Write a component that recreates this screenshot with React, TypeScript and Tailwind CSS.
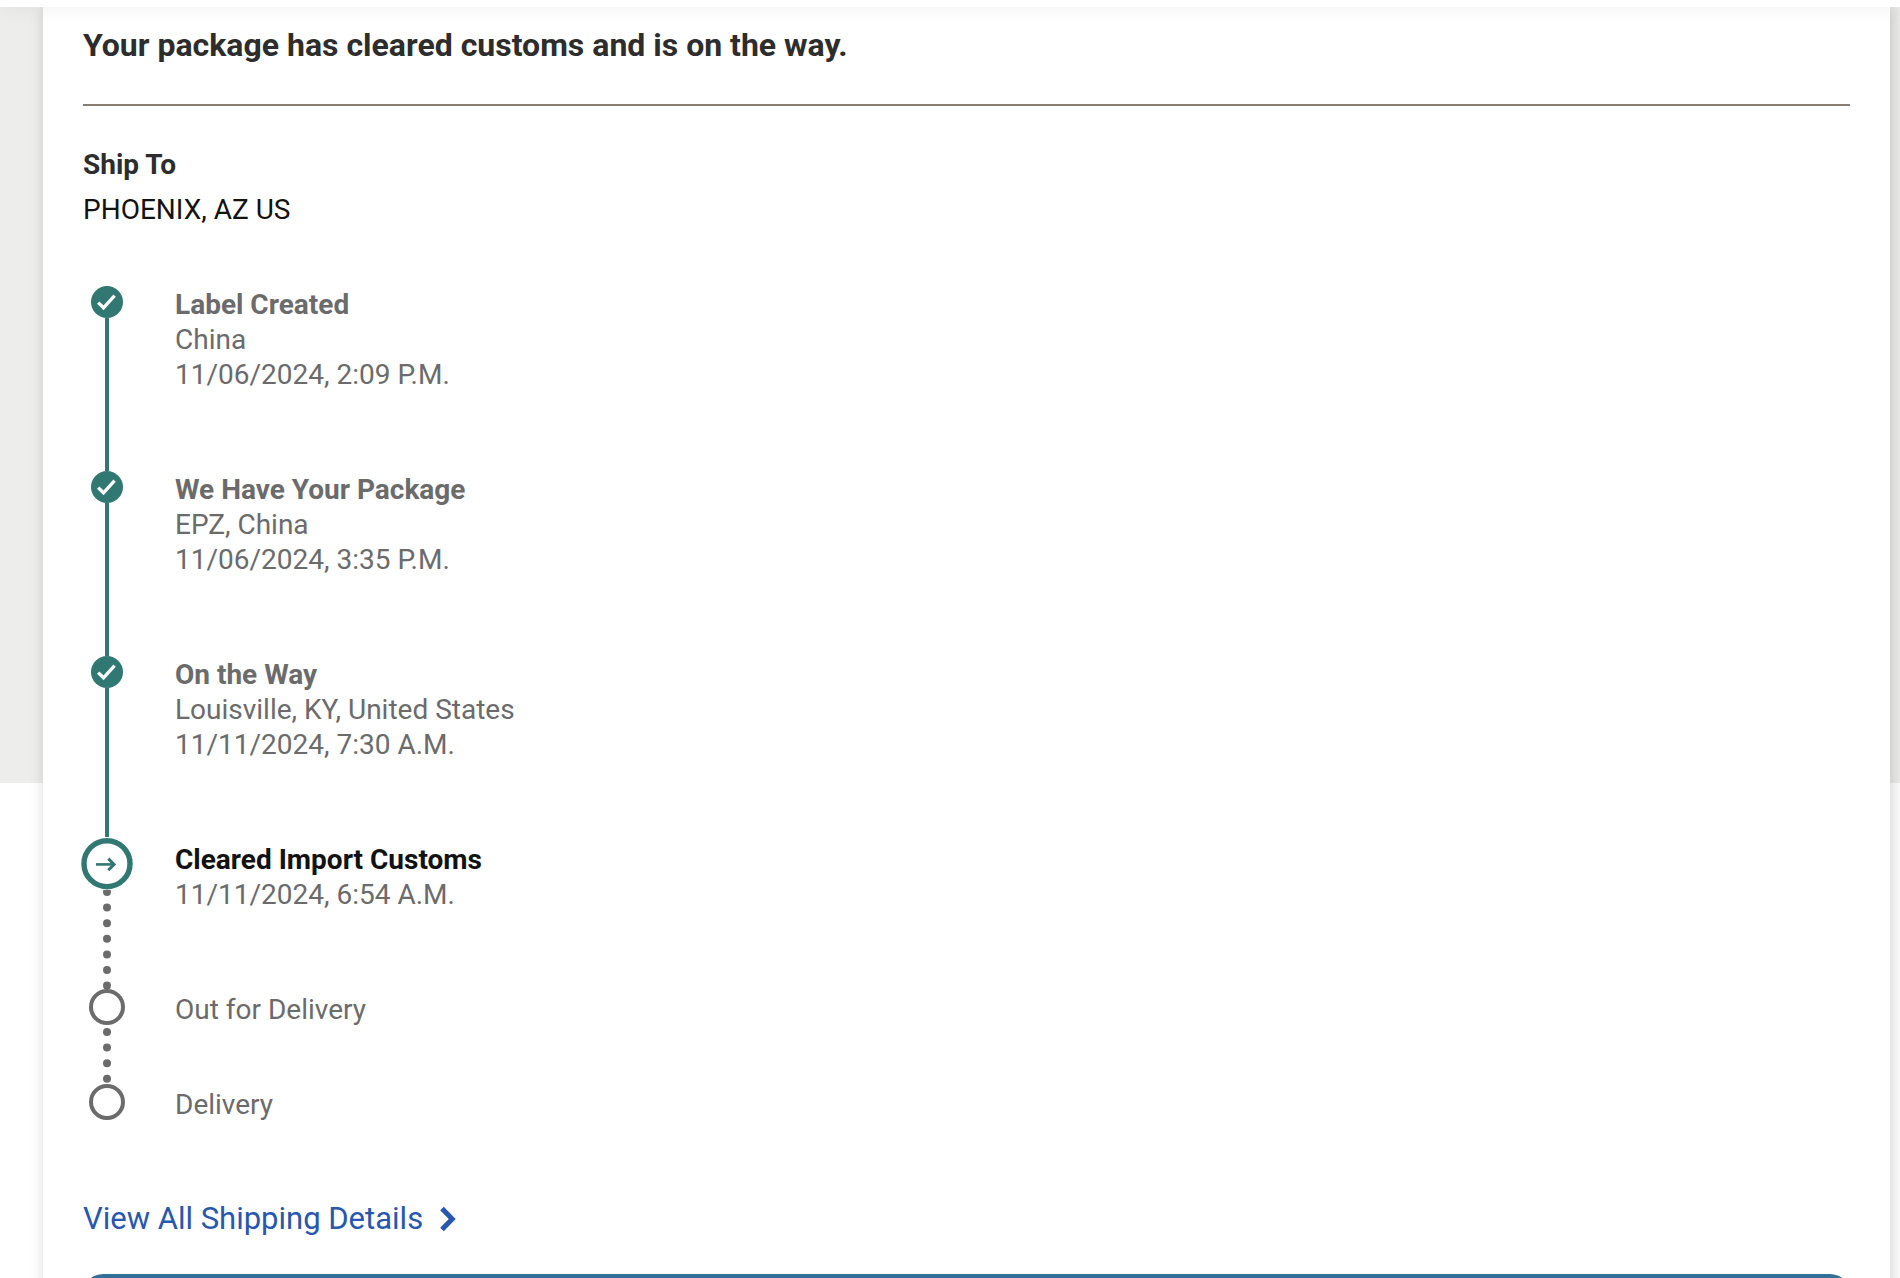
type StepStatus = 'done' | 'current' | 'pending';

interface Step {
  title: string;
  location?: string;
  time?: string;
  status: StepStatus;
}

const STEPS: Step[] = [
  { title: 'Label Created', location: 'China', time: '11/06/2024, 2:09 P.M.', status: 'done' },
  { title: 'We Have Your Package', location: 'EPZ, China', time: '11/06/2024, 3:35 P.M.', status: 'done' },
  { title: 'On the Way', location: 'Louisville, KY, United States', time: '11/11/2024, 7:30 A.M.', status: 'done' },
  { title: 'Cleared Import Customs', time: '11/11/2024, 6:54 A.M.', status: 'current' },
  { title: 'Out for Delivery', status: 'pending' },
  { title: 'Delivery', status: 'pending' },
];

const TITLE_STYLES: Record<StepStatus, string> = {
  done: 'font-bold',
  current: 'font-bold text-[#121212]',
  pending: '',
};

// space around the text of each step
const BODY_STYLES: Record<StepStatus, string> = {
  done: 'pt-px pb-[79px]',
  current: 'pt-1 pb-[77px]',
  pending: 'pt-[3px] pb-[57px]',
};

const Marker = ({ status }: { status: StepStatus }) => {
  if (status === 'done') {
    return (
      <svg className="size-8 shrink-0" viewBox="0 0 32 32" fill="none" aria-hidden="true">
        <circle cx="16" cy="16" r="16" fill="#307871" />
        <path d="M7.2 16.6L12.5 21.8L23.6 9.6" stroke="#fff" strokeWidth="3.3" />
      </svg>
    );
  }
  if (status === 'current') {
    return (
      <svg className="size-[52px] shrink-0" viewBox="0 0 52 52" fill="none" stroke="#307871" aria-hidden="true">
        <circle cx="26" cy="25.7" r="23" strokeWidth="5.4" fill="#fff" />
        <path d="M15 26.4H33" strokeWidth="2.6" />
        <path d="M27.3 20.6L33 26.4L27.3 32.2" strokeWidth="3" />
      </svg>
    );
  }
  return <span className="size-9 shrink-0 rounded-full border-4 border-[#6b6b6b] bg-white" />;
};

const Connector = ({ status }: { status: StepStatus }) => {
  if (status === 'done') return <span className="w-1 flex-1 bg-[#307871]" />;
  return (
    <svg className="h-0 w-2 grow" aria-hidden="true">
      <line x1="4" x2="4" y1={status === 'current' ? 2 : 7} y2="100%"
        stroke="#6b6b6b" strokeWidth="8" strokeLinecap="round" strokeDasharray="0 15.6" />
    </svg>
  );
};

const Timeline = () => (
  <ol className="mt-[59px]">
    {STEPS.map((step, i) => {
      const isLast = i === STEPS.length - 1;
      const beforeCurrent = STEPS[i + 1]?.status === 'current';
      return (
        <li key={step.title} className="flex gap-11">
          <div className={`flex w-12 flex-col items-center ${beforeCurrent ? 'pb-px' : ''}`}>
            <Marker status={step.status} />
            {!isLast && <Connector status={step.status} />}
          </div>
          <div className={`${beforeCurrent ? 'pt-px pb-[76px]' : BODY_STYLES[step.status]} text-[28px] leading-[35px] text-[#6b6b6b]`}>
            <h3 className={TITLE_STYLES[step.status]}>{step.title}</h3>
            {step.location && <p>{step.location}</p>}
            {step.time && <p>{step.time}</p>}
          </div>
        </li>
      );
    })}
  </ol>
);

export default function App() {
  return (
    <div className="h-screen overflow-hidden bg-[linear-gradient(#ededeb_783px,#fff_783px)] font-['Roboto','Liberation_Sans',sans-serif]">
      <header className="relative z-10 h-[7px] bg-white shadow-[0_0_20px_rgba(0,0,0,0.1)]" />
      <main className="mr-[10px] ml-[43px] bg-white px-10 pt-[18px] pb-10 shadow-[2px_0_14px_rgba(0,0,0,0.18)]">
        <h1 className="text-[32px] leading-10 font-bold text-[#2d2d2d]">
          Your package has cleared customs and is on the way.
        </h1>
        <hr className="mt-[39px] border-t-2 border-[#8a7d73]" />

        <section className="mt-[41px] text-[28px] leading-[35px]">
          <h2 className="font-bold text-[#2d2d2d]">Ship To</h2>
          <p className="mt-[10px] text-[#121212]">PHOENIX, AZ US</p>
        </section>

        <Timeline />

        <a href="#details" className="mt-[20px] flex w-fit items-center gap-4 text-[31px] leading-10 text-[#2757ae]">
          View All Shipping Details
          <svg className="h-[26px] w-[18px]" viewBox="0 0 18 26" fill="none" aria-hidden="true">
            <path d="M3 2.5L13.2 13L3 23.5" stroke="currentColor" strokeWidth="5" />
          </svg>
        </a>

        <div className="mt-[35px] h-20 rounded-[20px] bg-[#336f97]" />
      </main>
    </div>
  );
}
